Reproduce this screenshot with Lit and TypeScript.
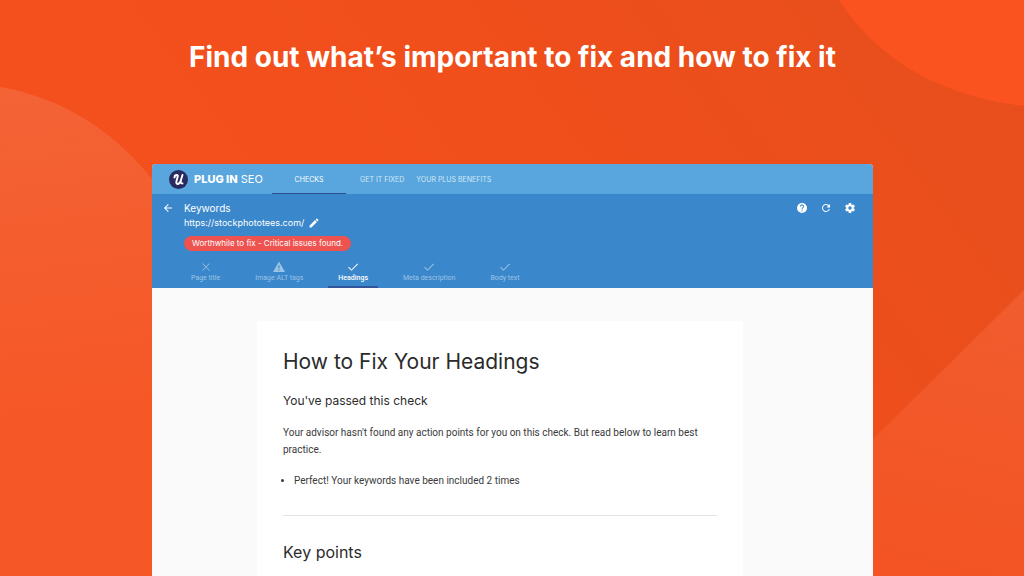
import { LitElement, html, css, svg } from "lit";
import { customElement, property, state } from "lit/decorators.js";
import { classMap } from "lit/directives/class-map.js";

const icons = {
  back: svg`<path d="M20 11H7.83l5.59-5.59L12 4l-8 8 8 8 1.41-1.41L7.83 13H20z"/>`,
  edit: svg`<path d="M3 17.25V21h3.75L17.81 9.94l-3.75-3.75zM20.71 7.04a1 1 0 0 0 0-1.41l-2.34-2.34a1 1 0 0 0-1.41 0l-1.83 1.83 3.75 3.75z"/>`,
  help: svg`<path d="M12 2a10 10 0 1 0 0 20 10 10 0 0 0 0-20zm1 17h-2v-2h2zm2.07-7.75-.9.92C13.45 12.9 13 13.5 13 15h-2v-.5c0-1.1.45-2.1 1.17-2.83l1.24-1.26A2 2 0 1 0 10 9H8a4 4 0 1 1 7.07 2.25z"/>`,
  refresh: svg`<path d="M17.65 6.35A8 8 0 1 0 19.73 14h-2.08A6 6 0 1 1 12 6c1.66 0 3.14.69 4.22 1.78L13 11h7V4z"/>`,
  settings: svg`<path d="M19.43 12.98a7.8 7.8 0 0 0 0-1.96l2.11-1.65a.5.5 0 0 0 .12-.64l-2-3.46a.5.5 0 0 0-.61-.22l-2.49 1a7.3 7.3 0 0 0-1.69-.98l-.38-2.65A.49.49 0 0 0 14 2h-4a.49.49 0 0 0-.49.42l-.38 2.65c-.61.25-1.17.59-1.69.98l-2.49-1a.5.5 0 0 0-.61.22l-2 3.46a.5.5 0 0 0 .12.64l2.11 1.65a7.9 7.9 0 0 0 0 1.96l-2.11 1.65a.5.5 0 0 0-.12.64l2 3.46c.12.22.39.3.61.22l2.49-1c.52.4 1.08.73 1.69.98l.38 2.65c.03.24.24.42.49.42h4c.25 0 .46-.18.49-.42l.38-2.65a7.3 7.3 0 0 0 1.69-.98l2.49 1c.23.09.49 0 .61-.22l2-3.46a.5.5 0 0 0-.12-.64zM12 15.5a3.5 3.5 0 1 1 0-7 3.5 3.5 0 0 1 0 7z"/>`,
  cross: svg`<path d="M19.5 5.5 18.500 4.500 12 11 5.500 4.500 4.500 5.500 11 12l-6.500 6.500 1 1L12 13l6.500 6.500 1-1L13 12z"/>`,
  warning: svg`<path d="M0 22h24L12 1zm13.200-3h-2.400v-2.400h2.400zm0-4.500h-2.400V9h2.400z"/>`,
  check: svg`<path d="M9 16.900 3.700 11.600l-1.400 1.400L9 19.700 22.200 6.500l-1.400-1.400z"/>`,
};

type IconName = keyof typeof icons;

@customElement("ui-icon")
class UiIcon extends LitElement {
  @property() name: IconName = "check";

  static styles = css`
    :host { display: block; width: 12px; height: 12px; }
    .glyph { display: block; width: 100%; height: 100%; fill: currentColor; }
  `;

  render() {
    return html`<svg class="glyph" viewBox="0 0 24 24" aria-hidden="true">${icons[this.name]}</svg>`;
  }
}

@customElement("promo-backdrop")
class PromoBackdrop extends LitElement {
  static styles = css`
    :host { display: block; }
    .art { display: block; width: 100%; height: 100%; }
  `;

  render() {
    return html`
      <svg class="art" viewBox="0 0 1024 576" preserveAspectRatio="none" aria-hidden="true">
        <defs>
          <linearGradient id="base" gradientUnits="userSpaceOnUse" x1="200" y1="500" x2="860" y2="0">
            <stop offset="0" stop-color="#f5511f" />
            <stop offset="0.6" stop-color="#f04e1b" />
            <stop offset="1" stop-color="#e84f1c" />
          </linearGradient>
          <linearGradient id="left" gradientUnits="userSpaceOnUse" x1="20" y1="90" x2="60" y2="420">
            <stop offset="0" stop-color="#f36336" />
            <stop offset="1" stop-color="#f65726" />
          </linearGradient>
          <linearGradient id="right" gradientUnits="userSpaceOnUse" x1="1000" y1="300" x2="930" y2="576">
            <stop offset="0" stop-color="#f15c2e" />
            <stop offset="1" stop-color="#f45423" />
          </linearGradient>
        </defs>
        <rect width="1024" height="576" fill="url(#base)" />
        <path d="M839 0C875 57 940 97 1024 106V0z" fill="#fb531f" />
        <path d="M0 87C62 98 113 130 152 179L400 440V576H0z" fill="url(#left)" />
        <path d="M1024 290L860 452V576H1024z" fill="url(#right)" />
      </svg>
    `;
  }
}

const tabs: { icon: IconName; label: string }[] = [
  { icon: "cross", label: "Page title" },
  { icon: "warning", label: "Image ALT tags" },
  { icon: "check", label: "Headings" },
  { icon: "check", label: "Meta description" },
  { icon: "check", label: "Body text" },
];

@customElement("app-root")
class AppRoot extends LitElement {
  @state() private current = "Headings";

  static styles = css`
    :host {
      display: block;
      position: relative;
      height: 100vh;
      overflow: hidden;
      font-family: Inter, "Noto Sans", sans-serif;
      color: #fff;
    }
    * { box-sizing: border-box; }
    h1, h2, h3, p, ul { margin: 0; padding: 0; font-weight: 400; }
    button { border: 0; padding: 0; background: none; color: inherit; font: inherit; cursor: pointer; }
    a { color: inherit; text-decoration: none; }

    .backdrop { position: absolute; inset: 0; z-index: -1; }
    .page { display: flex; flex-direction: column; height: 100%; padding: 0 151px 0 152px; }
    .headline {
      padding: 39px 0 89px;
      font-size: 28px;
      line-height: 36px;
      font-weight: 700;
      text-align: center;
      white-space: nowrap;
    }
    .window { flex: 1; min-height: 0; overflow: hidden; border-radius: 4px 4px 0 0; background: #fafafa; }

    .topbar { display: flex; height: 30px; padding-left: 17px; background: #58a6dd; }
    .brand { display: flex; align-items: center; width: 103px; gap: 6px; font-size: 11px; line-height: 12px; white-space: nowrap; }
    .mark { width: 19px; height: 19px; }
    .strong { font-weight: 800; }
    .nav { display: flex; font-size: 7px; }
    .nav-link { display: flex; align-items: center; padding: 2px 6px 0; color: #d3e8f7; white-space: nowrap; border-bottom: 1px solid transparent; }
    .nav-link.active { width: 74px; margin-right: 8px; justify-content: center; color: #fff; border-color: #2f4f8c; }

    .header { display: flex; flex-direction: column; height: 94px; background: #3a87cb; }
    .intro { display: flex; padding: 7px 17px 0 10px; }
    .back { width: 22px; height: 14px; }
    .details { flex: 1; }
    .name { font-size: 10px; line-height: 14px; }
    .site { display: flex; align-items: center; gap: 4px; font-size: 9px; line-height: 16px; }
    .badge {
      display: inline-block;
      margin-top: 5px;
      padding: 0 8px;
      border-radius: 8px;
      background: #ee534f;
      font-size: 8px;
      line-height: 15px;
      vertical-align: top;
    }
    .tools { display: flex; gap: 12px; height: 14px; align-items: center; }
    .tabs { display: flex; gap: 15px; margin-top: auto; padding-left: 29px; }
    .tab {
      display: flex;
      flex-direction: column;
      align-items: center;
      padding: 0 10px 3px;
      border-bottom: 2px solid transparent;
      color: #9cc3e5;
      font-family: Roboto, sans-serif;
      font-size: 7px;
      line-height: 10px;
      white-space: nowrap;
    }
    .tab.active { color: #fff; font-weight: 500; border-color: #31549a; }

    .card { margin: 33px 130px 0 105px; padding: 27px 26px 40px; background: #fff; color: #2b2b2b; }
    .title { font-size: 21px; line-height: 28px; }
    .passed { margin-top: 16px; font-size: 12px; line-height: 18px; }
    .text { font-family: Roboto, sans-serif; font-size: 10px; line-height: 17px; color: #3a3a3a; }
    .para { margin-top: 14px; }
    .list { margin-top: 14px; padding-left: 11px; }
    .rule { height: 1px; margin: 26px 0; border: 0; background: #e2e2e2; }
    .subtitle { font-size: 16px; line-height: 20px; }
  `;

  render() {
    return html`
      <promo-backdrop class="backdrop"></promo-backdrop>
      <main class="page">
        <h1 class="headline">Find out what’s important to fix and how to fix it</h1>
        <section class="window">
          <div class="topbar">
            <a class="brand" href="#home">
              <svg class="mark" viewBox="0 0 38 38" aria-hidden="true">
                <circle cx="19" cy="19" r="19" fill="#292b60" />
                <path d="M11 15c0-3 2-5 5-5 2 0 2 2 1 5l-2 7c-1 4 0 6 2 6 4 0 6-4 7-8l3-10-3 10c-1 4-1 7 3 7" fill="none" stroke="#fff" stroke-width="3.800" stroke-linecap="round" stroke-linejoin="round" />
              </svg>
              <span><span class="strong">PLUG IN</span> SEO</span>
            </a>
            <nav class="nav">
              <a class="nav-link active" href="#checks">CHECKS</a>
              <a class="nav-link" href="#fixed">GET IT FIXED</a>
              <a class="nav-link" href="#benefits">YOUR PLUS BENEFITS</a>
            </nav>
          </div>
          <header class="header">
            <div class="intro">
              <button class="back" aria-label="Back"><ui-icon name="back"></ui-icon></button>
              <div class="details">
                <div class="name">Keywords</div>
                <div class="site">
                  <span>https://stockphototees.com/</span>
                  <button aria-label="Edit address"><ui-icon name="edit"></ui-icon></button>
                </div>
                <span class="badge">Worthwhile to fix - Critical issues found.</span>
              </div>
              <div class="tools">
                <button aria-label="Help"><ui-icon name="help"></ui-icon></button>
                <button aria-label="Refresh"><ui-icon name="refresh"></ui-icon></button>
                <button aria-label="Settings"><ui-icon name="settings"></ui-icon></button>
              </div>
            </div>
            <div class="tabs" role="tablist">
              ${tabs.map(
                (tab) => html`
                  <button
                    class=${classMap({ tab: true, active: tab.label === this.current })}
                    role="tab"
                    aria-selected=${tab.label === this.current}
                    @click=${() => (this.current = tab.label)}
                  >
                    <ui-icon name=${tab.icon}></ui-icon>
                    <span>${tab.label}</span>
                  </button>
                `
              )}
            </div>
          </header>
          <article class="card">
            <h2 class="title">How to Fix Your Headings</h2>
            <h3 class="passed">You've passed this check</h3>
            <p class="text para">Your advisor hasn't found any action points for you on this check. But read below to learn best practice.</p>
            <ul class="text list"><li>Perfect! Your keywords have been included 2 times</li></ul>
            <hr class="rule" />
            <h2 class="subtitle">Key points</h2>
          </article>
        </section>
      </main>
    `;
  }
}
